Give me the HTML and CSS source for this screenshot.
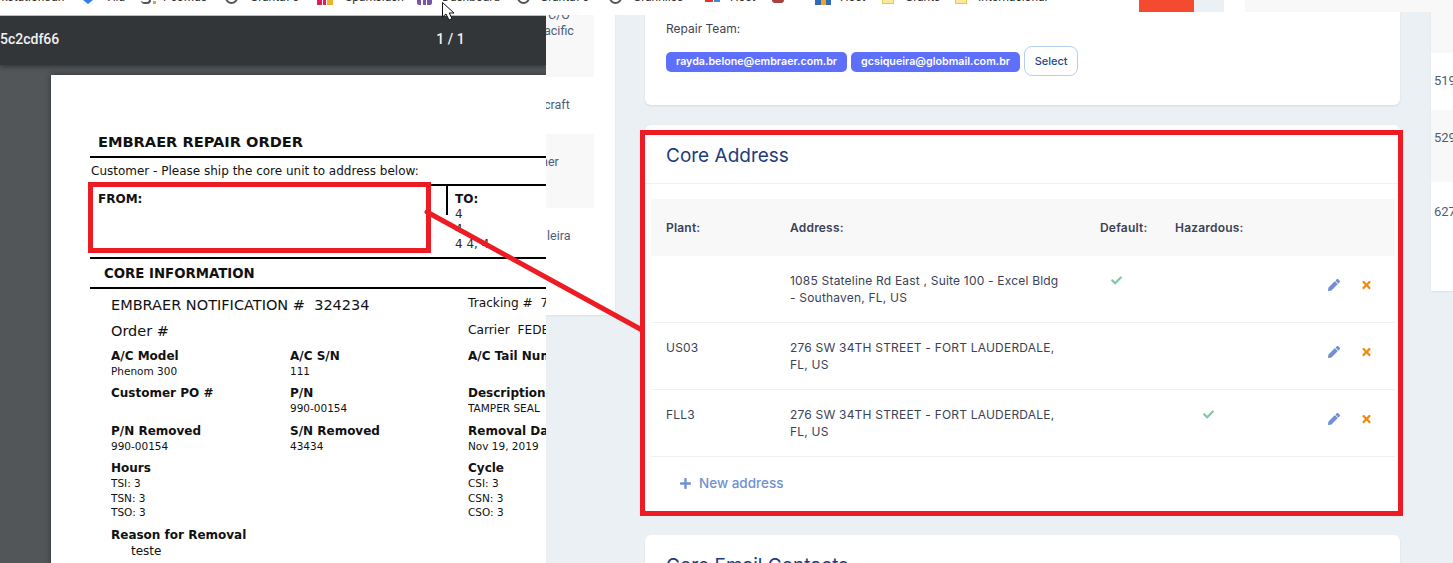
FILE: index.html
```html
<!DOCTYPE html>
<html lang="en">
<head>
  <meta charset="UTF-8">
  <title>Core Address</title>
  <link rel="stylesheet" href="styles.css">
</head>
<body>
  <svg class="sprites" width="0" height="0">
    <symbol id="i-check" viewBox="0 0 512 512"><path d="M173.898 439.404l-166.4-166.4c-9.997-9.997-9.997-26.206 0-36.204l36.203-36.204c9.997-9.998 26.207-9.998 36.204 0L192 312.69 432.095 72.596c9.997-9.997 26.207-9.997 36.204 0l36.203 36.204c9.997 9.997 9.997 26.206 0 36.204l-294.4 294.401c-9.998 9.997-26.207 9.997-36.204-.001z"/></symbol>
    <symbol id="i-pencil" viewBox="0 0 512 512"><path d="M497.9 142.1l-46.1 46.1c-4.7 4.7-12.3 4.7-17 0l-111-111c-4.7-4.7-4.7-12.3 0-17l46.1-46.1c18.7-18.7 49.1-18.7 67.9 0l60.1 60.1c18.8 18.7 18.8 49.1 0 67.9zM284.2 99.8L21.6 362.4.4 483.9c-2.9 16.4 11.4 30.6 27.8 27.8l121.5-21.3 262.6-262.6c4.7-4.7 4.7-12.3 0-17l-111-111c-4.8-4.7-12.4-4.7-17.1 0z"/></symbol>
    <symbol id="i-times" viewBox="0 0 352 512"><path d="M242.72 256l100.07-100.07c12.28-12.28 12.28-32.19 0-44.48l-22.24-22.24c-12.28-12.28-32.19-12.28-44.48 0L176 189.28 75.93 89.21c-12.28-12.28-32.19-12.28-44.48 0L9.21 111.45c-12.28 12.28-12.28 32.19 0 44.48L109.28 256 9.21 356.07c-12.28 12.28-12.28 32.19 0 44.48l22.24 22.24c12.28 12.28 32.2 12.28 44.48 0L176 322.72l100.07 100.07c12.28 12.28 32.2 12.28 44.48 0l22.24-22.24c12.28-12.28 12.28-32.19 0-44.48L242.72 256z"/></symbol>
    <symbol id="i-plus" viewBox="0 0 448 512"><path d="M416 208H272V64c0-17.67-14.33-32-32-32h-32c-17.67 0-32 14.33-32 32v144H32c-17.67 0-32 14.33-32 32v32c0 17.67 14.33 32 32 32h144v144c0 17.67 14.33 32 32 32h32c17.67 0 32-14.33 32-32V304h144c17.67 0 32-14.33 32-32v-32c0-17.67-14.33-32-32-32z"/></symbol>
  </svg>

  <div class="page">
    <div class="top-strip">
      <div class="bookmarks">
        <div class="bookmarks-inner">
          <span class="bm-first">Workstation3an</span>
          <i class="bm-blue"></i><span>Vila</span>
          <i class="bm-dark"></i><span>PeoMas</span>
          <i class="bm-ring"></i><span>Granta76</span>
          <i class="bm-slack"></i><span>Sparkslash</span>
          <i class="bm-purple"></i><span>Dashboard</span>
          <i class="bm-ring"></i><span>Granta76</span>
          <i class="bm-ring"></i><span>Granhiles</span>
          <i class="bm-red"></i><span>Host</span>
          <i class="bm-maroon"></i>
          <i class="bm-multi"></i><span>Host</span>
          <i class="bm-folder"></i><span>Grants</span>
          <i class="bm-folder"></i><span>Internacional</span>
        </div>
      </div>
      <div class="red-tab"></div>
      <div class="strip-gap"></div>
      <div class="strip-white"></div>
      <div class="strip-gray"></div>
    </div>

    <div class="columns">
      <div class="left-list">
        <div class="left-row row-a"><p>C/O</p><p>acific</p></div>
        <div class="left-row row-b">craft</div>
        <div class="left-row row-c">ner</div>
        <div class="left-row row-d">leira</div>
      </div>

      <div class="main">
        <section class="card card-team">
          <div class="team-label">Repair Team:</div>
          <div class="team-chips">
            <span class="chip">rayda.belone@embraer.com.br</span>
            <span class="chip">gcsiqueira@globmail.com.br</span>
            <button class="select-btn">Select</button>
          </div>
        </section>

        <section class="card card-address">
          <h3 class="card-title">Core Address</h3>
          <div class="card-body">
            <table class="address-table">
              <thead>
                <tr>
                  <th class="col-plant">Plant:</th>
                  <th class="col-address">Address:</th>
                  <th class="col-default">Default:</th>
                  <th class="col-hazard">Hazardous:</th>
                  <th></th>
                </tr>
              </thead>
              <tbody>
                <tr>
                  <td></td>
                  <td>1085 Stateline Rd East , Suite 100 - Excel Bldg - Southaven, FL, US</td>
                  <td class="flag-default"><svg class="icon-check"><use href="#i-check"/></svg></td>
                  <td></td>
                  <td class="actions">
                    <svg class="icon-pencil"><use href="#i-pencil"/></svg>
                    <svg class="icon-times"><use href="#i-times"/></svg>
                  </td>
                </tr>
                <tr>
                  <td>US03</td>
                  <td>276 SW 34TH STREET - FORT LAUDERDALE, FL, US</td>
                  <td></td>
                  <td></td>
                  <td class="actions">
                    <svg class="icon-pencil"><use href="#i-pencil"/></svg>
                    <svg class="icon-times"><use href="#i-times"/></svg>
                  </td>
                </tr>
                <tr>
                  <td>FLL3</td>
                  <td>276 SW 34TH STREET - FORT LAUDERDALE, FL, US</td>
                  <td></td>
                  <td class="flag-hazard"><svg class="icon-check"><use href="#i-check"/></svg></td>
                  <td class="actions">
                    <svg class="icon-pencil"><use href="#i-pencil"/></svg>
                    <svg class="icon-times"><use href="#i-times"/></svg>
                  </td>
                </tr>
              </tbody>
            </table>
            <a class="new-address"><svg class="icon-plus"><use href="#i-plus"/></svg>New address</a>
          </div>
        </section>

        <section class="card card-email">
          <h3 class="card-title">Core Email Contacts</h3>
        </section>
      </div>

      <div class="right-list">
        <div class="right-row row-a"></div>
        <div class="right-row row-b">519</div>
        <div class="right-row row-c">529</div>
        <div class="right-row row-d">627</div>
      </div>
    </div>

    <!-- pdf viewer window pasted over the page -->
    <div class="viewer">
      <div class="viewer-bar">
        <span class="viewer-name">5c2cdf66</span>
        <span class="viewer-count">1 / 1</span>
      </div>
      <div class="viewer-stage">
        <div class="sheet">
          <div class="sheet-title">EMBRAER REPAIR ORDER</div>
          <div class="sheet-note">Customer - Please ship the core unit to address below:</div>
          <div class="sheet-parties">
            <div class="party-from"><b>FROM:</b></div>
            <div class="party-to">
              <b>TO:</b>
              <p>4</p>
              <p>4</p>
              <p>4 4, 4</p>
            </div>
          </div>
          <div class="sheet-section">CORE INFORMATION</div>
          <div class="sheet-info">
            <div class="ref-row">
              <div class="ref-main">EMBRAER NOTIFICATION #&nbsp; 324234</div>
              <div class="ref-side">Tracking #&nbsp; 7</div>
            </div>
            <div class="ref-row ref-row-2">
              <div class="ref-main">Order #</div>
              <div class="ref-side">Carrier&nbsp; FEDEX</div>
            </div>
            <div class="info-grid">
              <div class="info"><b>A/C Model</b><p>Phenom 300</p></div>
              <div class="info"><b>A/C S/N</b><p>111</p></div>
              <div class="info"><b>A/C Tail Number</b></div>

              <div class="info"><b>Customer PO #</b></div>
              <div class="info"><b>P/N</b><p>990-00154</p></div>
              <div class="info"><b>Description</b><p>TAMPER SEAL</p></div>

              <div class="info"><b>P/N Removed</b><p>990-00154</p></div>
              <div class="info"><b>S/N Removed</b><p>43434</p></div>
              <div class="info"><b>Removal Date</b><p>Nov 19, 2019</p></div>

              <div class="info"><b>Hours</b><p>TSI: 3</p><p>TSN: 3</p><p>TSO: 3</p></div>
              <div class="info"></div>
              <div class="info"><b>Cycle</b><p>CSI: 3</p><p>CSN: 3</p><p>CSO: 3</p></div>
            </div>
            <div class="info info-reason"><b>Reason for Removal</b><p>teste</p></div>
          </div>
        </div>
      </div>
    </div>

    <!-- red markup drawn on top of the screenshot -->
    <svg class="markup" width="1453" height="563" viewBox="0 0 1453 563">
      <rect x="90.5" y="184.5" width="338" height="66" fill="none" stroke="#ed1c24" stroke-width="5"/>
      <rect x="642.5" y="132.5" width="758" height="381" fill="none" stroke="#ed1c24" stroke-width="5"/>
      <line x1="427" y1="212" x2="642" y2="330" stroke="#ed1c24" stroke-width="5" stroke-linecap="round"/>
      <path d="M442.5 2.5 V17 L446 14 L449 20 L452 18.6 L449.2 13 L454 13 Z" fill="#fff" stroke="#111" stroke-width="1"/>
    </svg>
  </div>
</body>
</html>
```

FILE: styles.css
```css
body {
  margin: 0;
  font-family: "Liberation Sans", Arial, sans-serif;
  background-color: #ebf0f4;
}

p {
  margin: 0;
}

.sprites {
  position: absolute;
}

.page {
  position: relative;
  width: 1453px;
  height: 563px;
  overflow: hidden;
  background-color: #ebf0f4;
}

/* browser bookmarks cut off at the top */
.top-strip {
  display: flex;
  height: 12px;
}

.bookmarks {
  width: 1139px;
  height: 15px;
  background-color: #fff;
  overflow: hidden;
  position: relative;
  z-index: 1;
}

.bookmarks-inner {
  display: grid;
  grid-template-columns: 83px 22px 36px 22px 62px 25px 67px 28px 72px 25px 75px 23px 69px 24px 72px 25px 42px 43px 25px 42px 23px 50px 23px auto;
  align-items: start;
  font-family: Roboto, sans-serif;
  font-size: 12px;
  line-height: 14px;
  color: #333;
  white-space: nowrap;
}

.bookmarks-inner span {
  margin-top: -10px;
}

.bookmarks-inner .bm-first {
  margin-left: -20px;
}

.bm-blue {
  width: 10px;
  height: 4px;
  background-color: #2d7ff0;
  clip-path: polygon(0 0, 100% 0, 50% 100%);
}

.bm-dark {
  position: relative;
  width: 8px;
  height: 2px;
  border-right: 2px solid #555;
  border-bottom: 2px solid #555;
  border-radius: 0 0 4px 4px;
}

.bm-dark::after {
  content: "";
  position: absolute;
  left: 12px;
  top: 1px;
  width: 3px;
  height: 3px;
  background-color: #f09a36;
}

.bm-ring {
  width: 13px;
  height: 13px;
  margin-top: -9px;
  box-sizing: border-box;
  border: 2px solid #555;
  border-radius: 50%;
}

.bm-slack {
  width: 16px;
  height: 5px;
  background: linear-gradient(90deg, #e01e5a 0 30%, #fff 30% 38%, #e01e5a 38% 55%, #fff 55% 62%, #ecb22e 62%);
}

.bm-purple {
  width: 15px;
  height: 5px;
  border-radius: 0 0 2px 2px;
  background: linear-gradient(90deg, #7a54a8 0 30%, #fff 30% 38%, #7a54a8 38% 60%, #fff 60% 68%, #7a54a8 68%);
}

.bm-red {
  width: 15px;
  height: 2px;
  background: linear-gradient(90deg, #e8322b 0 50%, #fff 50% 60%, #3a8ad8 60%);
}

.bm-maroon {
  width: 12px;
  height: 3px;
  border-radius: 0 0 6px 6px;
  background-color: #a5423f;
}

.bm-multi {
  width: 16px;
  height: 5px;
  background: linear-gradient(90deg, #2f6ab8 0 35%, #f0a030 35% 70%, #2f6ab8 70%);
}

.bm-folder {
  width: 10px;
  height: 3px;
  border: 1px solid #e6c654;
  border-top: 0;
  background-color: #fde89a;
}

.red-tab {
  width: 55px;
  background-color: #f44a30;
}

.strip-gap {
  width: 30px;
}

.strip-white {
  width: 21px;
  background-color: #fff;
}

.strip-gray {
  flex: 1;
  background-color: #f8f8f9;
}

.columns {
  display: flex;
  align-items: flex-start;
}

/* list on the left, mostly under the pdf window */
.left-list {
  width: 615px;
  box-sizing: border-box;
  padding: 0 21px 0 546px;
  background-color: #fff;
  box-shadow: 0 1px 2px rgba(0, 0, 0, 0.06);
  font-family: Roboto, sans-serif;
  font-size: 12.5px;
  line-height: 16px;
  color: #4f5b76;
}

.left-row {
  box-sizing: border-box;
  overflow: hidden;
}

.left-row.row-a {
  height: 73px;
  margin-top: -8px;
  padding-top: 3px;
  text-indent: 2px;
  background-color: #f8f8f9;
}

.left-row.row-a p + p {
  text-indent: -2px;
}

.left-row.row-b {
  height: 57px;
  padding-top: 20px;
  text-indent: -2px;
}

.left-row.row-c {
  height: 74px;
  padding-top: 20px;
  text-indent: -5px;
  background-color: #f8f8f9;
}

.left-row.row-d {
  height: 107px;
  padding-top: 20px;
  text-indent: 1px;
}

.main {
  width: 816px;
  box-sizing: border-box;
  padding: 0 31px 0 30px;
}

.card {
  background-color: #fff;
  border-radius: 6px;
  box-shadow: 0 1px 2px rgba(40, 60, 90, 0.12);
}

.card-team {
  height: 93px;
  margin-bottom: 20px;
  padding: 9px 21px 0;
  box-sizing: border-box;
  border-radius: 0 0 6px 6px;
}

.team-label {
  font-family: Inter, sans-serif;
  font-size: 12px;
  line-height: 16px;
  color: #3f4254;
}

.team-chips {
  display: flex;
  align-items: center;
  gap: 4px;
  margin-top: 9px;
}

.chip {
  height: 20px;
  margin-top: 2px;
  padding: 0 10px;
  border-radius: 5px;
  background-color: #5e6ffb;
  font-family: Inter, sans-serif;
  font-size: 10.7px;
  font-weight: 600;
  line-height: 20px;
  color: #fff;
}

.select-btn {
  width: 54px;
  height: 30px;
  padding: 0;
  border: 1px solid #b5cdf5;
  border-radius: 8px;
  background-color: #fff;
  font-family: Inter, sans-serif;
  font-size: 11px;
  font-weight: 500;
  color: #24468f;
}

.card-address {
  height: 389px;
  margin-bottom: 21px;
}

.card-title {
  margin: 0;
  height: 59px;
  padding: 19px 21px 0;
  box-sizing: border-box;
  border-bottom: 1px solid #f0f2f5;
  font-family: Inter, sans-serif;
  font-size: 19px;
  font-weight: 400;
  line-height: 24px;
  color: #1c3d7d;
}

.card-body {
  padding: 15px 5px 0 6px;
}

.address-table {
  width: 744px;
  table-layout: fixed;
  border-collapse: collapse;
  font-family: Inter, sans-serif;
  font-size: 12px;
  line-height: 17px;
  letter-spacing: 0.2px;
  color: #3a4256;
}

.address-table th {
  height: 57px;
  box-sizing: border-box;
  padding: 0;
  background-color: #f8f8f9;
  text-align: left;
  font-weight: 600;
}

.address-table th.col-plant {
  width: 139px;
  padding-left: 15px;
}

.address-table th.col-address { width: 310px; }
.address-table th.col-default { width: 75px; }
.address-table th.col-hazard { width: 153px; }

.address-table td {
  height: 67px;
  box-sizing: border-box;
  padding: 16px 0 0;
  border-bottom: 1px solid #eef0f3;
  vertical-align: top;
}

.address-table tbody tr:first-child td {
  height: 66px;
}

.address-table td:first-child {
  padding-left: 15px;
}

.address-table td:nth-child(2) {
  padding-right: 36px;
}

.address-table td.flag-default {
  padding-left: 11px;
}

.address-table td.flag-hazard {
  padding-left: 28px;
}

.icon-check {
  display: block;
  width: 11px;
  height: 11px;
  margin-top: 3px;
  fill: #7fc8a0;
}

.actions {
  white-space: nowrap;
}

.icon-pencil {
  width: 12px;
  height: 12px;
  margin-top: 7px;
  margin-right: 18px;
  fill: #6f90d2;
}

.icon-times {
  width: 9px;
  height: 12px;
  margin-top: 7px;
  fill: #f08a0c;
}

.new-address {
  display: flex;
  align-items: center;
  height: 53px;
  padding-left: 29px;
  font-family: Inter, sans-serif;
  font-size: 13.5px;
  font-weight: 500;
  color: #6f90d2;
}

.icon-plus {
  width: 11px;
  height: 13px;
  margin-right: 8px;
  fill: #6f90d2;
}

.card-email {
  height: 80px;
}

.right-list {
  width: 22px;
  font-family: Roboto, sans-serif;
  font-size: 13px;
  line-height: 17px;
  color: #4f5b76;
  overflow: hidden;
  background-color: #fff;
  box-shadow: 0 1px 2px rgba(0, 0, 0, 0.06);
}

.right-row {
  box-sizing: border-box;
  padding-left: 3px;
}

.right-row.row-a {
  height: 41px;
  background-color: #f8f8f9;
}

.right-row.row-b {
  height: 57px;
  padding-top: 19px;
}

.right-row.row-c {
  height: 72px;
  padding-top: 19px;
  background-color: #f8f8f9;
}

.right-row.row-d {
  height: 109px;
  padding-top: 21px;
}

/* pdf window */
.viewer {
  position: absolute;
  left: 0;
  top: 15px;
  width: 546px;
  height: 548px;
  overflow: hidden;
  border-top: 1px solid #bdbdbd;
  box-sizing: border-box;
  background-color: #525659;
}

.viewer-bar {
  display: flex;
  justify-content: center;
  position: relative;
  height: 49px;
  background-color: #323639;
  box-shadow: 0 2px 4px rgba(0, 0, 0, 0.35);
  font-family: Roboto, sans-serif;
  font-size: 14px;
  line-height: 47px;
  color: #f1f1f1;
}

.viewer-name {
  position: absolute;
  left: 0;
  font-weight: 500;
}

.viewer-count {
  margin-left: 355px;
  font-weight: 500;
}

.viewer-stage {
  padding: 10px 0 0 51px;
}

.sheet {
  width: 560px;
  height: 600px;
  padding-left: 39px;
  box-sizing: border-box;
  background-color: #fff;
  box-shadow: 0 0 6px rgba(0, 0, 0, 0.4);
  font-family: "DejaVu Sans", sans-serif;
  color: #111;
}

.sheet-title {
  height: 83px;
  padding: 57px 0 0 8px;
  box-sizing: border-box;
  border-bottom: 2px solid #000;
  font-size: 14.6px;
  font-weight: 700;
  line-height: 20px;
  width: 470px;
}

.sheet-note {
  height: 26px;
  padding-left: 1px;
  font-size: 12px;
  line-height: 27px;
}

.sheet-parties {
  display: flex;
  height: 75px;
  border-top: 2px solid #000;
  border-bottom: 2px solid #000;
  box-sizing: border-box;
  width: 470px;
  font-size: 12px;
  line-height: 15px;
}

.party-from {
  width: 358px;
  padding: 6px 0 0 8px;
  box-sizing: border-box;
  height: 29px;
  border-right: 2px solid #000;
}

.party-to {
  padding: 6px 0 0 7px;
  color: #3a2a10;
}

.party-to b {
  color: #111;
}

.sheet-section {
  width: 470px;
  height: 30px;
  padding: 5px 0 0 14px;
  box-sizing: border-box;
  border-bottom: 2px solid #000;
  font-size: 13.3px;
  font-weight: 700;
  line-height: 20px;
}

.sheet-info {
  padding: 5px 0 0 21px;
  font-size: 12px;
}

.ref-row {
  display: flex;
  height: 26px;
  width: 440px;
  align-items: flex-start;
}

.ref-main {
  flex: none;
  width: 357px;
  font-size: 14.5px;
  line-height: 22px;
}

.ref-side {
  white-space: nowrap;
  font-size: 12.2px;
  line-height: 18px;
}

.ref-row-2 .ref-side {
  line-height: 20px;
}

.info-grid {
  display: grid;
  grid-template-columns: 179px 178px 120px;
  grid-template-rows: 37px 38px 37px 67px;
  margin-top: 2px;
}

.info {
  font-size: 10.5px;
  line-height: 14.5px;
  white-space: nowrap;
  overflow: hidden;
}

.info b {
  display: block;
  font-size: 12px;
  line-height: 16px;
}

.info-reason p {
  padding-left: 20px;
  font-size: 12px;
  line-height: 17px;
}

.markup {
  position: absolute;
  left: 0;
  top: 0;
  z-index: 2;
}
```
